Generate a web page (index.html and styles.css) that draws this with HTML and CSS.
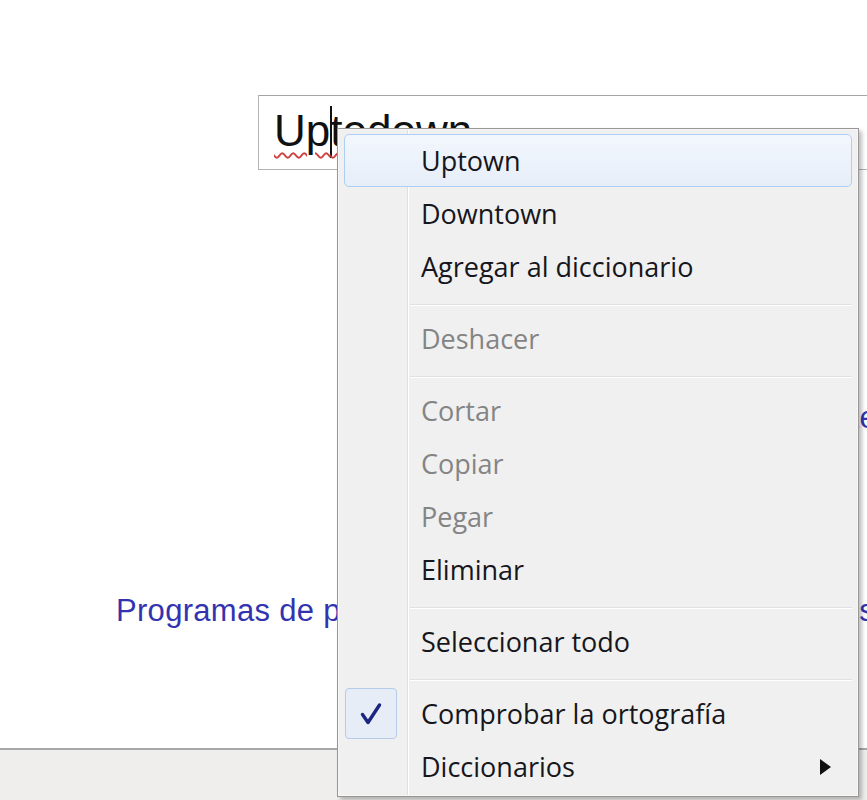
FILE: index.html
```html
<!DOCTYPE html>
<html>
	<head>
		<title>Uptodown</title>
		<link rel="stylesheet" href="styles.css">
	</head>
	<body>
		<div class="page">
			<div class="field">
				<span class="typo">Up<span class="caret"></span>todown</span>
			</div>
			<div class="links first">
				<a href="#">Juegos de este</a>
			</div>
			<div class="links second">
				<a href="#">Programas de pago</a>
				<a href="#" class="tail">Juegos</a>
			</div>
			<div class="statusbar"></div>
		</div>

		<div class="menu">
			<div class="item hover">Uptown</div>
			<div class="item">Downtown</div>
			<div class="item">Agregar al diccionario</div>
			<div class="sep"></div>
			<div class="item off">Deshacer</div>
			<div class="sep"></div>
			<div class="item off">Cortar</div>
			<div class="item off">Copiar</div>
			<div class="item off">Pegar</div>
			<div class="item">Eliminar</div>
			<div class="sep"></div>
			<div class="item">Seleccionar todo</div>
			<div class="sep"></div>
			<div class="item checked">
				<span class="check">
					<svg width="24" height="24" viewBox="0 0 24 24"><path d="M3.5 12.5 L9 20.5 L20.5 3" fill="none" stroke="#1c2580" stroke-width="3.4" stroke-linejoin="round" stroke-linecap="round"/></svg>
				</span>
				Comprobar la ortografía
			</div>
			<div class="item sub">Diccionarios<span class="arrow"></span></div>
		</div>
	</body>
</html>
```

FILE: styles.css
```css
html {
	background-color: white;
}
body {
	margin: 0px;
	position: relative;
	height: 800px;
	overflow: hidden;
}
.page {
	display: flex;
	flex-direction: column;
	height: 800px;
}

/* text box with the misspelled word */
.field {
	margin: 95px 0px 0px 258px;
	height: 75px;
	box-sizing: border-box;
	border: 1px solid #b3b3b3;
	border-top-color: #a5a5a5;
	border-right: none;
	padding-left: 15px;
	font-family: "Liberation Sans", Arial, sans-serif;
	font-size: 44px;
	line-height: 70px;
	color: #111;
}
.typo {
	text-decoration: underline wavy #d04040;
	text-decoration-thickness: 1.5px;
	text-underline-offset: 6px;
}
.caret {
	display: inline-block;
	width: 0px;
	height: 52px;
	border-left: 2px solid #111;
	margin-right: -2px;
	vertical-align: -12px;
}

/* page links behind the menu */
.links {
	display: flex;
	justify-content: space-between;
	font-family: "Liberation Sans", Arial, sans-serif;
	font-size: 31px;
	letter-spacing: 0.3px;
	line-height: 34px;
	white-space: nowrap;
}
.links a {
	color: #3333b0;
	text-decoration: none;
}
.links.first {
	margin-top: 231px;
	justify-content: flex-end;
	margin-right: -10px;
}
.links.second {
	margin-top: 159px;
	padding-left: 116px;
	margin-right: -8px;
}
.statusbar {
	margin-top: auto;
	height: 50px;
	background-color: #efeeec;
	border-top: 2px solid #a8a8a8;
}

/* context menu */
.menu {
	position: absolute;
	left: 337px;
	top: 128px;
	width: 522px;
	box-sizing: border-box;
	border: 1px solid #979797;
	padding: 5px 6px 3px 6px;
	background: linear-gradient(to right, #f0f0f0 69px, #dfdfdf 69px, #dfdfdf 70px, #fff 70px, #fff 71px, #f0f0f0 71px);
	box-shadow: inset 0px 0px 0px 1px #f7f7f7, 3px 3px 4px rgba(0, 0, 0, 0.25);
	font-family: "Open Sans", "Noto Sans", sans-serif;
	font-size: 27px;
	color: #16161c;
}
.item {
	height: 53px;
	box-sizing: border-box;
	display: flex;
	align-items: center;
	padding-left: 76px;
	border: 1px solid transparent;
	border-radius: 5px;
	position: relative;
	white-space: nowrap;
}
.item.hover {
	border-color: #aecff4;
	background: linear-gradient(#f3f7fd, #e6eef9);
}
.item.off {
	color: #848484;
}
.sep {
	height: 19px;
	margin-left: 66px;
	background: linear-gradient(#f0f0f0 11px, #e0e0e0 11px, #e0e0e0 12px, #fff 12px, #fff 13px, #f0f0f0 13px);
}
.check {
	position: absolute;
	left: 0px;
	top: 0px;
	width: 52px;
	height: 51px;
	box-sizing: border-box;
	border: 1px solid #b6cbe6;
	border-radius: 4px;
	background-color: #e6edf7;
	display: flex;
	align-items: center;
	justify-content: center;
}
.arrow {
	margin-left: auto;
	margin-right: 20px;
	width: 0px;
	height: 0px;
	border-top: 8px solid transparent;
	border-bottom: 8px solid transparent;
	border-left: 11px solid #111;
}
```
